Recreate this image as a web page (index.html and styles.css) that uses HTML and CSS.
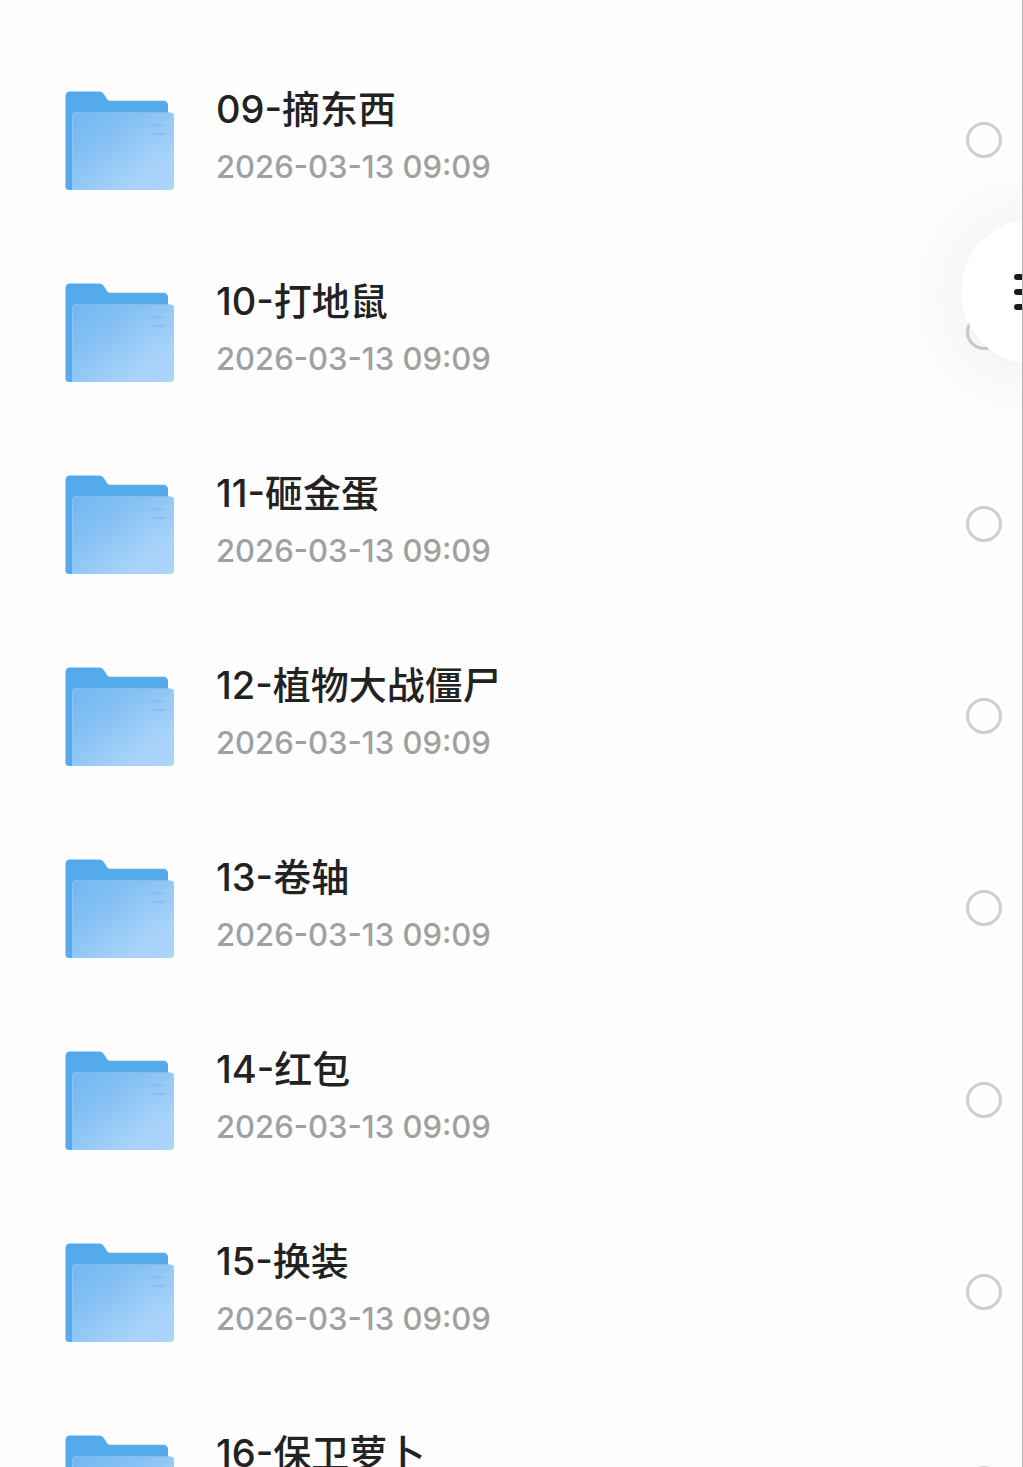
FILE: index.html
```
<!DOCTYPE html>
<html lang="zh-CN">
<head>
    <meta charset="UTF-8">
    <meta name="viewport" content="width=device-width, initial-scale=1.0">
    <title>文件列表</title>
    <link rel="stylesheet" href="styles.css">
</head>
<body>
    <!-- folder icon shared by all rows -->
    <svg class="sprite" aria-hidden="true">
        <defs>
            <linearGradient id="back" x1="0" y1="0" x2="0" y2="1">
                <stop offset="0" stop-color="#53aaea" />
                <stop offset="1" stop-color="#5aa9e8" />
            </linearGradient>
            <linearGradient id="front" x1="0" y1="0" x2="1" y2="1">
                <stop offset="0" stop-color="#72b7f0" />
                <stop offset="0.3" stop-color="#82bff3" />
                <stop offset="0.75" stop-color="#a8d3f9" />
                <stop offset="1" stop-color="#abd5fa" />
            </linearGradient>
        </defs>
        <symbol id="folder" viewBox="0 0 110 100">
            <path fill="url(#back)" d="M5 0.500H33c3.500 0 5 1 6.500 3.500l2.500 4c1 1.500 2 1.800 4 1.800H98q5 0 5 5V60L20 99H4q-3.500 0-3.500-3.500V5Q0.500 0.500 5 0.500Z" />
            <path fill="url(#front)" d="M10 21.500H105q4 0 4 4V95q0 4-4 4H7V24.500q0-3 3-3Z" />
            <path fill="none" stroke="#8cc5f5" stroke-width="1" d="M7.500 98V25q0-3 3-3H104" />
            <path fill="none" stroke="#8cbdec" stroke-width="2.500" d="M88 34.500H99M88 43H100" />
        </symbol>
    </svg>

    <main class="page">
        <ul class="file-list">
            <li class="file-row">
                <svg class="folder-icon" aria-hidden="true"><use href="#folder" /></svg>
                <label class="file-info" for="file-09">
                    <span class="file-name">09-摘东西</span>
                    <time class="file-date">2026-03-13 09:09</time>
                </label>
                <input class="file-check" type="checkbox" id="file-09">
            </li>
            <li class="file-row">
                <svg class="folder-icon" aria-hidden="true"><use href="#folder" /></svg>
                <label class="file-info" for="file-10">
                    <span class="file-name">10-打地鼠</span>
                    <time class="file-date">2026-03-13 09:09</time>
                </label>
                <input class="file-check" type="checkbox" id="file-10">
            </li>
            <li class="file-row">
                <svg class="folder-icon" aria-hidden="true"><use href="#folder" /></svg>
                <label class="file-info" for="file-11">
                    <span class="file-name">11-砸金蛋</span>
                    <time class="file-date">2026-03-13 09:09</time>
                </label>
                <input class="file-check" type="checkbox" id="file-11">
            </li>
            <li class="file-row">
                <svg class="folder-icon" aria-hidden="true"><use href="#folder" /></svg>
                <label class="file-info" for="file-12">
                    <span class="file-name">12-植物大战僵尸</span>
                    <time class="file-date">2026-03-13 09:09</time>
                </label>
                <input class="file-check" type="checkbox" id="file-12">
            </li>
            <li class="file-row">
                <svg class="folder-icon" aria-hidden="true"><use href="#folder" /></svg>
                <label class="file-info" for="file-13">
                    <span class="file-name">13-卷轴</span>
                    <time class="file-date">2026-03-13 09:09</time>
                </label>
                <input class="file-check" type="checkbox" id="file-13">
            </li>
            <li class="file-row">
                <svg class="folder-icon" aria-hidden="true"><use href="#folder" /></svg>
                <label class="file-info" for="file-14">
                    <span class="file-name">14-红包</span>
                    <time class="file-date">2026-03-13 09:09</time>
                </label>
                <input class="file-check" type="checkbox" id="file-14">
            </li>
            <li class="file-row">
                <svg class="folder-icon" aria-hidden="true"><use href="#folder" /></svg>
                <label class="file-info" for="file-15">
                    <span class="file-name">15-换装</span>
                    <time class="file-date">2026-03-13 09:09</time>
                </label>
                <input class="file-check" type="checkbox" id="file-15">
            </li>
            <li class="file-row">
                <svg class="folder-icon" aria-hidden="true"><use href="#folder" /></svg>
                <label class="file-info" for="file-16">
                    <span class="file-name">16-保卫萝卜</span>
                    <time class="file-date">2026-03-13 09:09</time>
                </label>
                <input class="file-check" type="checkbox" id="file-16">
            </li>
        </ul>

        <button class="menu-btn" type="button" aria-label="菜单">
            <svg class="menu-icon" viewBox="0 0 40 38" aria-hidden="true">
                <path d="M3 4H37M3 19H37M3 34H37" />
            </svg>
        </button>
    </main>
</body>
</html>
```
FILE: styles.css
```
* {
  box-sizing: border-box;
}

body {
  margin: 0;
  background-color: #fefefe;
  color: #222222;
  font-family: Inter, "Noto Sans CJK SC", sans-serif;
}

.sprite {
  position: absolute;
  width: 0;
  height: 0;
}

.page {
  position: relative;
  height: 100vh;
  overflow: hidden;
  border-right: 1px solid #b4b4b4;
}

/* File list */
.file-list {
  margin: 0;
  padding: 44px 20px 0 65px;
  list-style: none;
}

.file-row {
  display: flex;
  align-items: center;
  height: 192px;
}

.folder-icon {
  flex: none;
  width: 110px;
  height: 100px;
  margin-top: 2px;
}

.file-info {
  display: flex;
  flex: 1;
  flex-direction: column;
  gap: 10px;
  margin-left: 41px;
  padding-bottom: 12px;
}

.file-name {
  font-size: 38px;
  font-weight: 500;
  line-height: 56px;
}

.file-date {
  color: #a0a0a0;
  font-size: 31px;
  font-weight: 500;
  line-height: 40px;
}

.file-check {
  appearance: none;
  flex: none;
  width: 36px;
  height: 36px;
  margin: 0;
  border: 3px solid #cdcfcf;
  border-radius: 50%;
}

.file-check:checked {
  border-color: #53aaea;
  background-color: #53aaea;
}

/* Floating menu button, half off the right edge */
.menu-btn {
  position: absolute;
  top: 219px;
  right: -84px;
  display: flex;
  align-items: center;
  justify-content: center;
  width: 145px;
  height: 145px;
  padding: 0;
  border: none;
  border-radius: 50%;
  background-color: #ffffff;
  box-shadow: 0 4px 100px rgba(0, 0, 0, 0.09);
}

.menu-icon {
  width: 40px;
  height: 38px;
  fill: none;
  stroke: #1c1c1c;
  stroke-width: 6;
  stroke-linecap: round;
}
```
